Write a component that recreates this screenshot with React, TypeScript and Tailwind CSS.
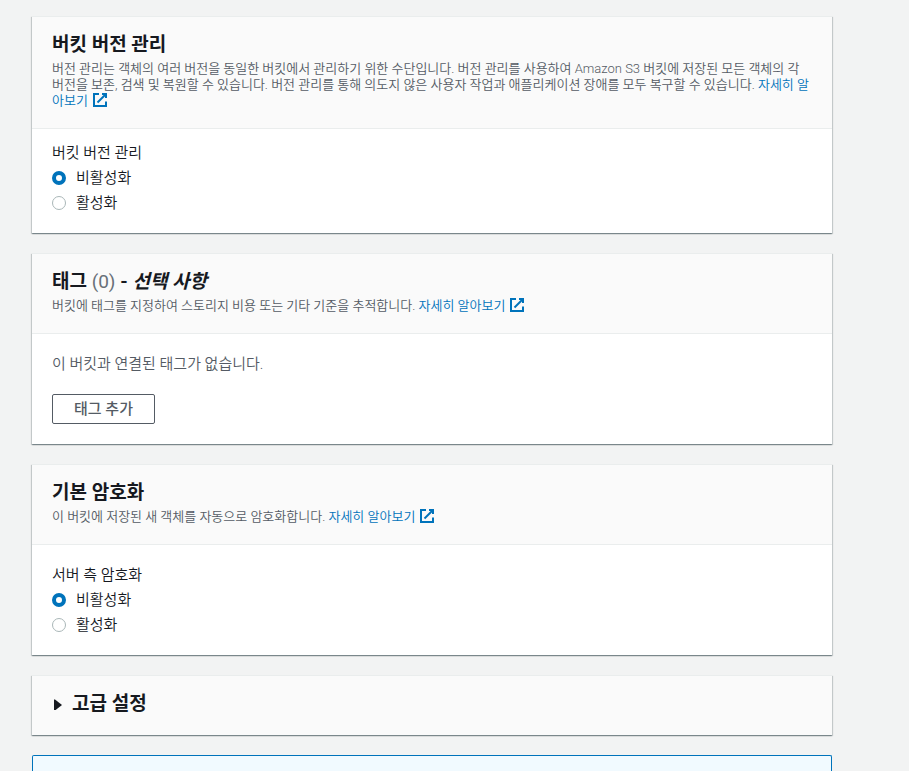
import type { ReactNode } from "react";

function ExternalIcon() {
  return (
    <svg className="-mt-1 ml-1 inline-block size-4 align-text-bottom" viewBox="0 0 16 16" fill="none" stroke="currentColor" strokeWidth="2" aria-hidden="true">
      <path d="M10 2h4v4" />
      <path d="M5.5 10.5L14 2" />
      <path d="M7 2H2v12h12V9.5" />
    </svg>
  );
}

function LearnMore() {
  return (
    <a href="#learn-more" className="text-[#0073bb]">
      자세히 알아보기
      <ExternalIcon />
    </a>
  );
}

const panelStyle =
  "border-t border-[#eaeded] bg-white shadow-[0_1px_1px_0_rgba(0,28,36,0.3),1px_1px_1px_0_rgba(0,28,36,0.15),-1px_1px_1px_0_rgba(0,28,36,0.15)]";

type PanelProps = {
  title: ReactNode;
  description: ReactNode;
  compact?: boolean;
  children: ReactNode;
};

function Panel({ title, description, compact = false, children }: PanelProps) {
  return (
    <section className={panelStyle}>
      <header className="border-b border-[#eaeded] bg-[#fafafa] px-5 pt-4 pb-[19px]">
        <h2 className="text-[19px] leading-6 font-bold">{title}</h2>
        <p className="mt-1 text-[13px] leading-4 font-[350] text-[#545b64]">{description}</p>
      </header>
      <div className={compact ? "px-5 pt-3.5 pb-5" : "p-5"}>{children}</div>
    </section>
  );
}

function RadioGroup({ legend, name }: { legend: string; name: string }) {
  return (
    <fieldset className="text-[15px] leading-5 font-[350]">
      <legend>{legend}</legend>
      {["비활성화", "활성화"].map((label, index) => (
        <label key={label} className="mt-[5px] flex items-center gap-2.5">
          <input
            type="radio"
            name={name}
            defaultChecked={index === 0}
            className="size-3.5 appearance-none rounded-full border border-[#aab7b8] bg-white checked:border-4 checked:border-[#0073bb]"
          />
          {label}
        </label>
      ))}
    </fieldset>
  );
}

export default function App() {
  return (
    <main className="min-h-screen bg-[#f2f3f3] pt-4 pr-[77px] pl-8 font-[Roboto,'Noto_Sans_CJK_KR',sans-serif] text-[#16191f]">
      <div className="flex flex-col gap-5">
        <Panel
          compact
          title="버킷 버전 관리"
          description={
            <>
              버전 관리는 객체의 여러 버전을 동일한 버킷에서 관리하기 위한 수단입니다. 버전 관리를 사용하여 Amazon S3
              버킷에 저장된 모든 객체의 각 버전을 보존, 검색 및 복원할 수 있습니다. 버전 관리를 통해 의도지 않은 사용자
              작업과 애플리케이션 장애를 모두 복구할 수 있습니다. <LearnMore />
            </>
          }
        >
          <RadioGroup legend="버킷 버전 관리" name="versioning" />
        </Panel>
        <Panel
          title={
            <>
              태그 <span className="font-normal text-[#687078]">(0)</span> - <i>선택 사항</i>
            </>
          }
          description={
            <>
              버킷에 태그를 지정하여 스토리지 비용 또는 기타 기준을 추적합니다. <LearnMore />
            </>
          }
        >
          <p className="text-[15px] leading-5 font-[350] text-[#545b64]">이 버킷과 연결된 태그가 없습니다.</p>
          <button
            type="button"
            className="mt-5 block rounded-xs border border-[#545b64] bg-white px-[21px] py-1 text-[15px] leading-5 font-medium text-[#545b64]"
          >
            태그 추가
          </button>
        </Panel>
        <Panel
          title="기본 암호화"
          description={
            <>
              이 버킷에 저장된 새 객체를 자동으로 암호화합니다. <LearnMore />
            </>
          }
        >
          <RadioGroup legend="서버 측 암호화" name="encryption" />
        </Panel>
        <section className={panelStyle}>
          <h2 className="bg-[#fafafa]">
            <button
              type="button"
              aria-expanded="false"
              className="flex w-full items-center gap-2.5 px-5 pt-4 pb-[19px] text-[19px] leading-6 font-bold"
            >
              <svg className="h-3 w-2.5" viewBox="0 0 10 12" fill="currentColor" aria-hidden="true">
                <path d="M2 1.5h1L10 7l-7 5.5H2z" />
              </svg>
              고급 설정
            </button>
          </h2>
        </section>
        <div role="status" className="h-4 rounded-t-xs border border-b-0 border-[#0073bb] bg-[#f1faff]" />
      </div>
    </main>
  );
}
